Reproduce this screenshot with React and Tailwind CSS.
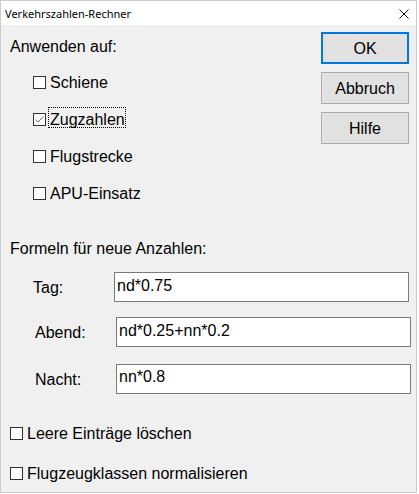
import React from "react";

function Box({ checked }) {
  return (
    <span className="w-[13px] h-[13px] shrink-0 border border-[#333333] bg-white flex items-center justify-center">
      {checked && (
        <svg width="11" height="11" viewBox="0 0 11 11">
          <polyline points="1.5,5.5 4,8 9.5,2.5" fill="none" stroke="#6a6a6a" strokeWidth="1" />
        </svg>
      )}
    </span>
  );
}

function Check({ label, checked, focused }) {
  return (
    <div className="h-[17px] flex items-center">
      <Box checked={checked} />
      <span className="relative ml-[4px] whitespace-nowrap">
        {label}
        {focused && (
          <span className="absolute -top-[4px] bottom-0 -left-[2px] -right-[1px] border border-dotted border-black pointer-events-none" />
        )}
      </span>
    </div>
  );
}

function Button({ children, primary }) {
  return (
    <div
      className={
        "w-[88px] h-[32px] bg-[#e1e1e1] flex items-center justify-center " +
        (primary ? "border-2 border-[#0078d7]" : "border border-[#adadad]")
      }
    >
      {children}
    </div>
  );
}

function Field({ label, value, pad, top }) {
  return (
    <div className="flex items-center h-[30px]" style={{ paddingLeft: pad }}>
      <span className="w-[81px] shrink-0">{label}</span>
      <div
        className="w-[295px] h-[30px] border border-[#7a7a7a] bg-white pl-[2px]"
        style={{ paddingTop: top }}
      >
        {value}
      </div>
    </div>
  );
}

export default function App() {
  return (
    <div className="w-[417px] h-[493px] border border-[#cccccc] bg-[#f0f0f0] flex flex-col font-['Liberation_Sans',Arial,sans-serif] text-[16px] leading-[17px] text-black">
      <div className="h-[24px] shrink-0 bg-white flex items-center justify-between pl-[4px] pr-[7px]">
        <span className="font-['Noto_Sans',sans-serif] text-[11px] leading-[14px] pt-[1px] text-black">
          Verkehrszahlen-Rechner
        </span>
        <svg width="10" height="10" viewBox="0 0 10 10" className="mt-[1px]">
          <path d="M0.5 0.5 L9.5 9.5 M9.5 0.5 L0.5 9.5" stroke="#111" strokeWidth="1" fill="none" />
        </svg>
      </div>

      <div className="flex-1 flex flex-col">
        <div className="flex justify-between">
          <div className="flex flex-col pl-[9px] pt-[13px]">
            <div className="h-[17px]">Anwenden auf:</div>
            <div className="flex flex-col gap-[20px] mt-[19px] pl-[23px]">
              <Check label="Schiene" />
              <Check label="Zugzahlen" checked focused />
              <Check label="Flugstrecke" />
              <Check label="APU-Einsatz" />
            </div>
          </div>
          <div className="flex flex-col gap-[8px] pt-[7px] mr-[7px]">
            <Button primary>OK</Button>
            <Button>Abbruch</Button>
            <Button>Hilfe</Button>
          </div>
        </div>

        <div className="h-[17px] mt-[38px] pl-[9px]">Formeln für neue Anzahlen:</div>

        <div className="mt-[15px]">
          <Field label="Tag:" value="nd*0.75" pad="32px" top="4px" />
        </div>
        <div className="mt-[15px]">
          <Field label="Abend:" value="nd*0.25+nn*0.2" pad="34px" top="4px" />
        </div>
        <div className="mt-[17px]">
          <Field label="Nacht:" value="nn*0.8" pad="34px" top="3px" />
        </div>

        <div className="mt-[31px] pl-[9px]">
          <Check label="Leere Einträge löschen" />
        </div>
        <div className="mt-[23px] pl-[9px]">
          <Check label="Flugzeugklassen normalisieren" />
        </div>
      </div>
    </div>
  );
}
